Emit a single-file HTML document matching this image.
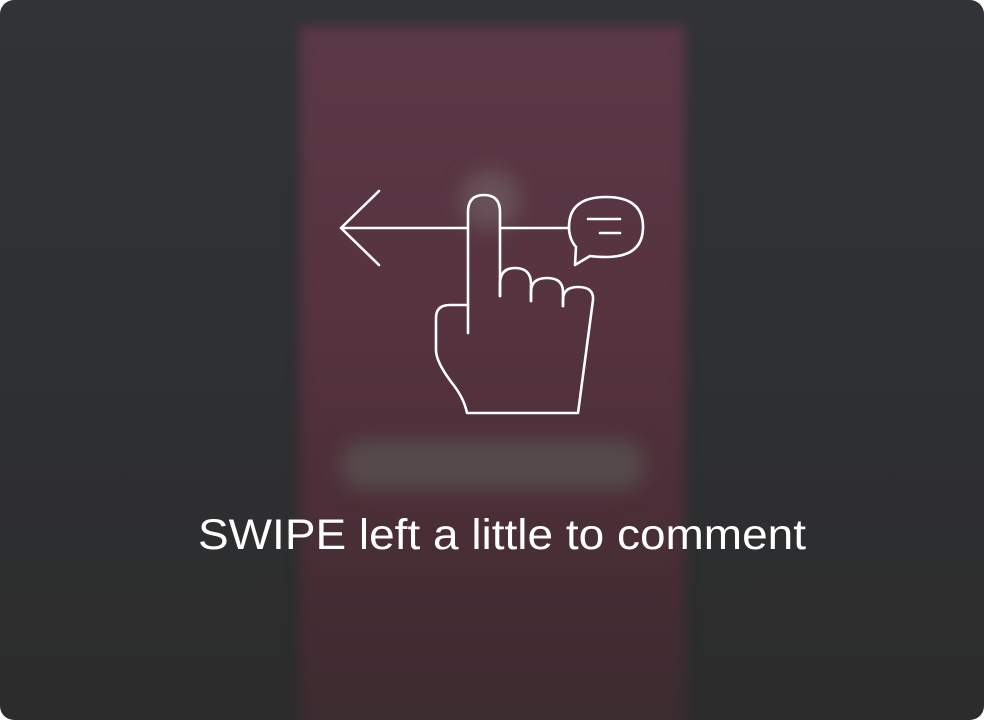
<!DOCTYPE html>
<html><head><style>
html,body{margin:0;padding:0;background:#fff;}
.wrap{position:relative;width:984px;height:720px;border-radius:14px;overflow:hidden;background:linear-gradient(#313337,#2e2f31 60%,#2c2c2c);}
.phone{position:absolute;left:300px;top:26px;width:385px;height:720px;background:linear-gradient(#5c3846,#56333f 40%,#4a2e36 70%,#3a2b2f);filter:blur(6px);}
.blob{position:absolute;background:rgba(120,110,110,.5);filter:blur(10px);}
</style></head><body>
<div class="wrap">
<div class="phone"></div>
<div class="blob" style="left:460px;top:170px;width:60px;height:60px;border-radius:30px;"></div>
<div class="blob" style="left:340px;top:440px;width:305px;height:50px;border-radius:25px;background:rgba(90,85,85,.7)"></div>
<svg width="984" height="720" style="position:absolute;left:0;top:0" fill="none" stroke="#fff" stroke-width="2.6" stroke-linecap="round" stroke-linejoin="round">
<path d="M379 191 L341 228 L379 265 M341 228 H467 M501 228 H568"/>
<path d="M468 333 V212 Q468 195 484 195 Q500 195 500 212 V296"/>
<path d="M500 296 V284 Q500 268 515 268 Q531 268 531 284 V301"/>
<path d="M531 301 V292 Q531 278 547 278 Q563 278 563 292 V306"/>
<path d="M563 306 V300 Q563 287 578 287 Q594 287 593 300 L578 413 H467 Q464 398 452 383 Q436 362 436 350 V318 Q436 305 450 305 H468"/>
<path d="M575 265 L576 247 Q569 239 569 227 Q569 197 606 197 Q643 197 643 227 Q643 257 606 257 Q597 257 590 256 Z"/>
<path d="M588 219 H620 M600 233 H620"/>
<text x="502" y="549" fill="#fff" stroke="none" text-anchor="middle" font-family="Liberation Sans, sans-serif" font-size="43" font-weight="300" textLength="608" lengthAdjust="spacingAndGlyphs">SWIPE left a little to comment</text>
</svg>
</div>
</body></html>
